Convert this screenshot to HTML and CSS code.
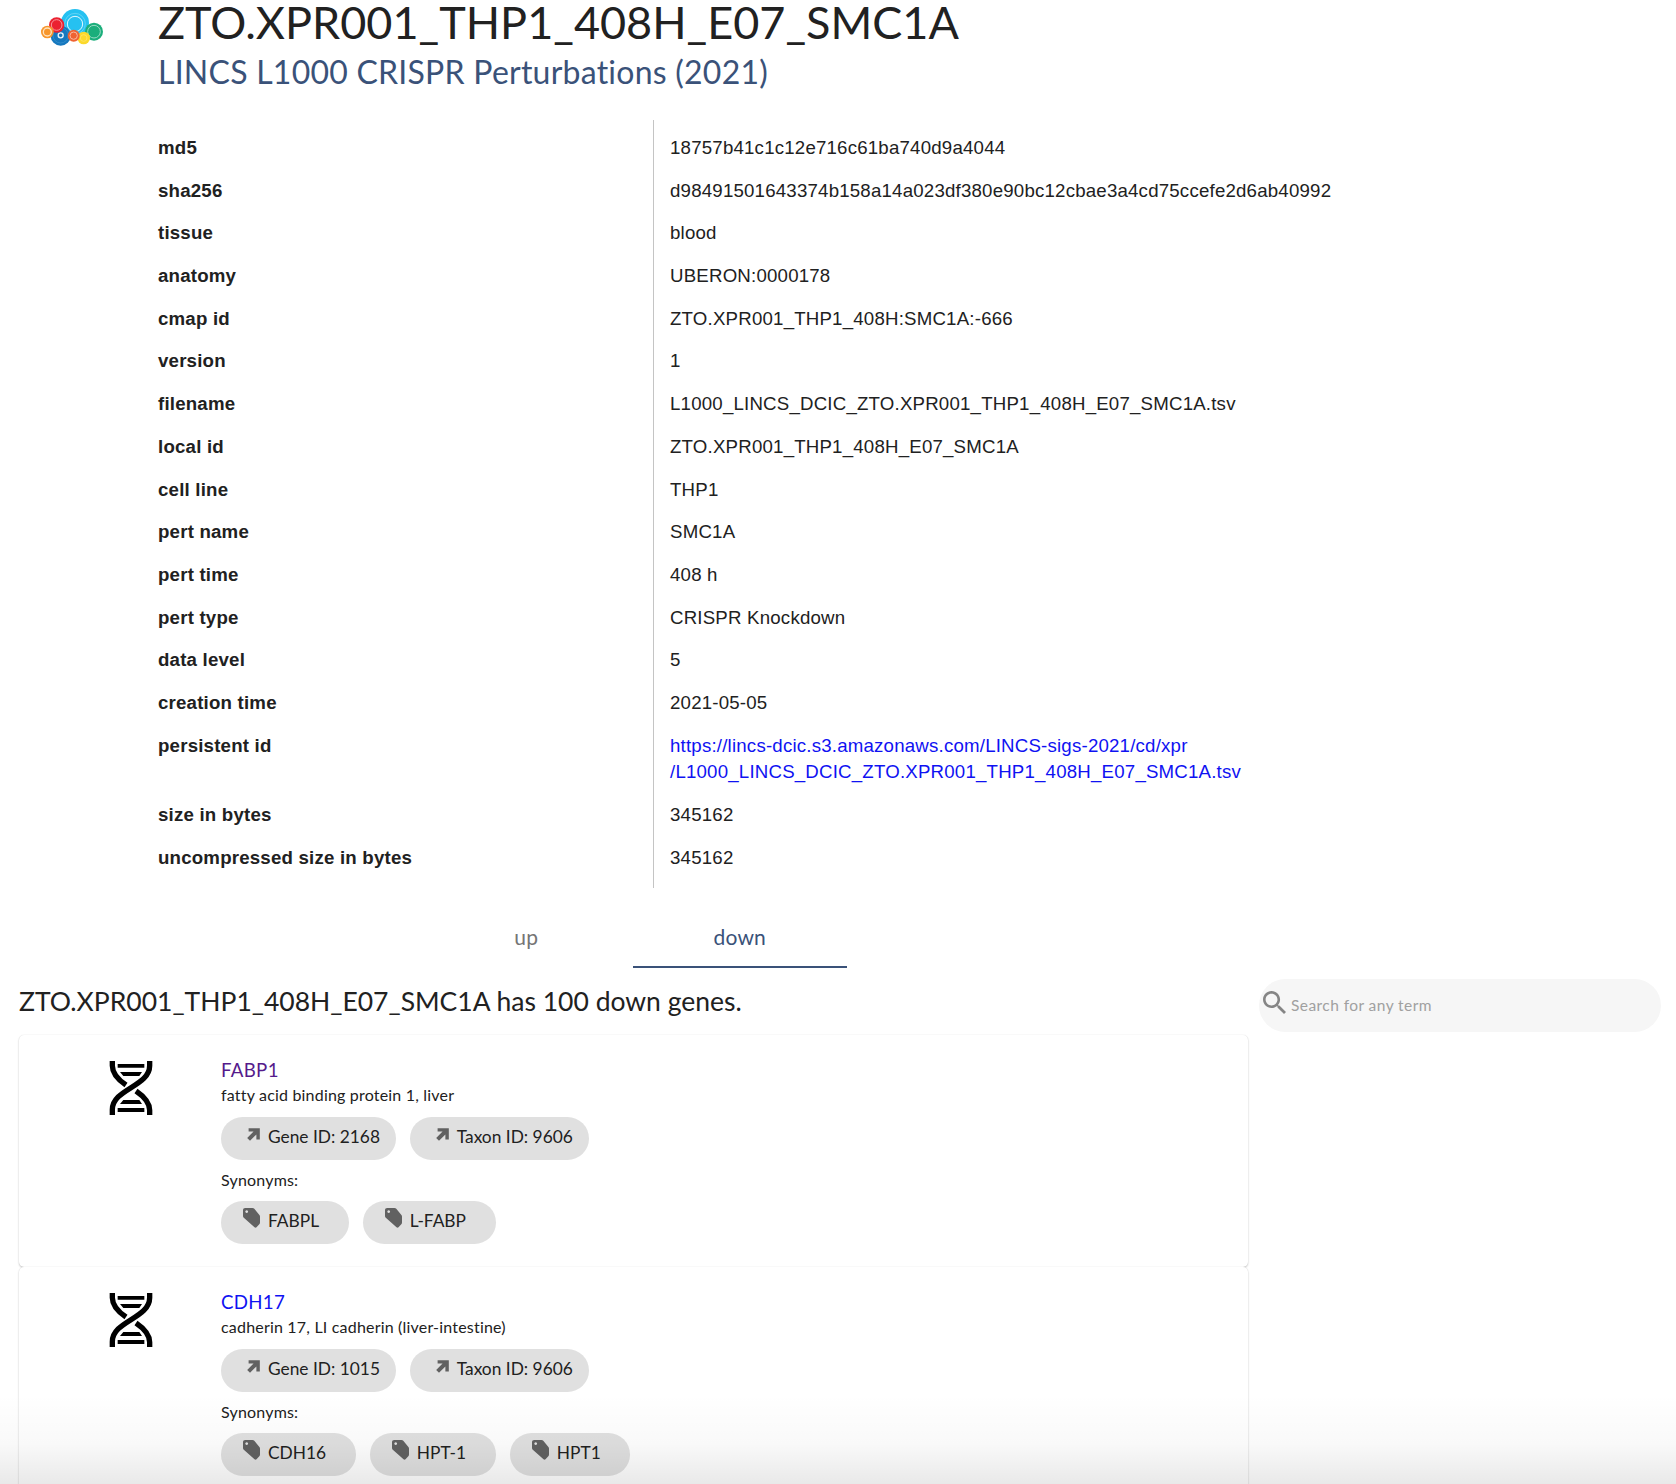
FILE: index.html
```html
<!DOCTYPE html>
<html lang="en">
<head>
<meta charset="utf-8">
<title>ZTO.XPR001_THP1_408H_E07_SMC1A</title>
<link rel="stylesheet" href="styles.css">
</head>
<body>
<svg class="defs" width="0" height="0">
  <symbol id="dna" viewBox="0 0 130 162">
    <g fill="none" stroke="#000" stroke-width="16">
      <path d="M121 0V14C121 76 9 84 9 146V162"/>
      <path d="M9 0V14C9 40 28 57 50 72M80 90C102 105 121 122 121 148V162"/>
    </g>
    <path d="M25 9H105V20H25ZM32 33H98L90 45H42ZM42 117H90L98 129H32ZM25 141H105V153H25Z"/>
  </symbol>
  <symbol id="arrow" viewBox="5.500 5.500 13 13"><path d="M8.500 18.310L5.690 15.500L12.060 9.120H7.110V5.690H18.310V16.890H14.880V11.940Z"/></symbol>
  <symbol id="tag" viewBox="0 0 17 20"><path fill-rule="evenodd" d="M2.200 0H9.500C10.300 0 10.800.2 11.300.8L16.400 7C16.900 7.600 17 8 17 8.700V14.500C17 15.200 16.800 15.700 16.300 16.200L13.500 19.300C12.900 19.900 12.100 19.900 11.500 19.300L.8 9.800C.2 9.200 0 8.700 0 8V2.200C0 .9.9 0 2.200 0ZM3.700 2.200A1.400 1.400 0 1 0 3.710 2.200Z"/></symbol>
</svg>
<header class="head">
  <svg class="logo" viewBox="0 0 270 180">
    <circle cx="135" cy="69" r="42" fill="#25c1f1"/><circle cx="135" cy="71" r="31" fill="none" stroke="#7bdcf7" stroke-width="2"/><circle cx="135" cy="72" r="23" fill="none" stroke="#e4f8fe" stroke-width="3"/>
    <circle cx="92" cy="107" r="30" fill="#1678be"/><circle cx="92" cy="106" r="23" fill="none" stroke="#3c94d0" stroke-width="2"/><circle cx="92" cy="106" r="7.500" fill="none" stroke="#e8f4fb" stroke-width="4"/>
    <circle cx="80" cy="75" r="23" fill="#eb2130"/><circle cx="80" cy="75" r="16" fill="none" stroke="#f7949b" stroke-width="3"/>
    <circle cx="52" cy="96" r="19" fill="#f7962c"/><circle cx="52" cy="96" r="12" fill="none" stroke="#ffe2bd" stroke-width="4"/>
    <circle cx="192" cy="95" r="27" fill="#1bae7b"/><circle cx="192" cy="95" r="19" fill="none" stroke="#98dcc4" stroke-width="3"/>
    <circle cx="161" cy="114" r="19" fill="#fbd92b"/><circle cx="161" cy="114" r="10" fill="none" stroke="#fde777" stroke-width="2"/>
    <circle cx="131" cy="107" r="18" fill="#ef6232"/><circle cx="131" cy="107" r="11" fill="none" stroke="#f9b7a0" stroke-width="3"/>
  </svg>
  <div>
    <h1 class="title">ZTO.XPR001_THP1_408H_E07_SMC1A</h1>
    <p class="subtitle">LINCS L1000 CRISPR Perturbations (2021)</p>
  </div>
</header>
<dl class="meta">
  <div class="row"><dt>md5</dt><dd>18757b41c1c12e716c61ba740d9a4044</dd></div>
  <div class="row"><dt>sha256</dt><dd>d98491501643374b158a14a023df380e90bc12cbae3a4cd75ccefe2d6ab40992</dd></div>
  <div class="row"><dt>tissue</dt><dd>blood</dd></div>
  <div class="row"><dt>anatomy</dt><dd>UBERON:0000178</dd></div>
  <div class="row"><dt>cmap id</dt><dd>ZTO.XPR001_THP1_408H:SMC1A:-666</dd></div>
  <div class="row"><dt>version</dt><dd>1</dd></div>
  <div class="row"><dt>filename</dt><dd>L1000_LINCS_DCIC_ZTO.XPR001_THP1_408H_E07_SMC1A.tsv</dd></div>
  <div class="row"><dt>local id</dt><dd>ZTO.XPR001_THP1_408H_E07_SMC1A</dd></div>
  <div class="row"><dt>cell line</dt><dd>THP1</dd></div>
  <div class="row"><dt>pert name</dt><dd>SMC1A</dd></div>
  <div class="row"><dt>pert time</dt><dd>408 h</dd></div>
  <div class="row"><dt>pert type</dt><dd>CRISPR Knockdown</dd></div>
  <div class="row"><dt>data level</dt><dd>5</dd></div>
  <div class="row"><dt>creation time</dt><dd>2021-05-05</dd></div>
  <div class="row"><dt>persistent id</dt><dd><a class="link">https://lincs-dcic.s3.amazonaws.com/LINCS-sigs-2021/cd/xpr<br>/L1000_LINCS_DCIC_ZTO.XPR001_THP1_408H_E07_SMC1A.tsv</a></dd></div>
  <div class="row"><dt>size in bytes</dt><dd>345162</dd></div>
  <div class="row"><dt>uncompressed size in bytes</dt><dd>345162</dd></div>
</dl>
<nav class="tabs"><span class="tab">up</span><span class="tab active">down</span></nav>
<main class="main">
  <section class="results">
    <h2 class="count">ZTO.XPR001_THP1_408H_E07_SMC1A has 100 down genes.</h2>
    <article class="card">
      <svg class="dna"><use href="#dna"/></svg>
      <div class="info">
        <a class="gene visited">FABP1</a>
        <p class="small">fatty acid binding protein 1, liver</p>
        <div class="chips">
          <span class="chip"><svg class="arrow"><use href="#arrow"/></svg>Gene ID: 2168</span>
          <span class="chip"><svg class="arrow"><use href="#arrow"/></svg>Taxon ID: 9606</span>
        </div>
        <p class="small syn">Synonyms:</p>
        <div class="chips tags">
          <span class="chip"><svg class="tag"><use href="#tag"/></svg>FABPL</span>
          <span class="chip"><svg class="tag"><use href="#tag"/></svg>L-FABP</span>
        </div>
      </div>
    </article>
    <article class="card">
      <svg class="dna"><use href="#dna"/></svg>
      <div class="info">
        <a class="gene">CDH17</a>
        <p class="small">cadherin 17, LI cadherin (liver-intestine)</p>
        <div class="chips">
          <span class="chip"><svg class="arrow"><use href="#arrow"/></svg>Gene ID: 1015</span>
          <span class="chip"><svg class="arrow"><use href="#arrow"/></svg>Taxon ID: 9606</span>
        </div>
        <p class="small syn">Synonyms:</p>
        <div class="chips tags">
          <span class="chip"><svg class="tag"><use href="#tag"/></svg>CDH16</span>
          <span class="chip"><svg class="tag"><use href="#tag"/></svg>HPT-1</span>
          <span class="chip"><svg class="tag"><use href="#tag"/></svg>HPT1</span>
        </div>
      </div>
    </article>
  </section>
  <div class="search">
    <svg class="glass" viewBox="3 3 17.500 17.500"><path d="M15.500 14h-.79l-.28-.27C15.410 12.590 16 11.110 16 9.500 16 5.910 13.090 3 9.500 3S3 5.910 3 9.500 5.910 16 9.500 16c1.610 0 3.090-.59 4.230-1.570l.27.28v.79l5 4.990L20.490 19l-4.990-5zm-6 0C7.010 14 5 11.990 5 9.500S7.010 5 9.500 5 14 7.010 14 9.500 11.990 14 9.500 14z"/></svg>
    <span>Search for any term</span>
  </div>
</main>
<div class="fade"></div>
</body>
</html>
```
FILE: styles.css
```css
* { box-sizing: border-box; margin: 0; padding: 0; }
body { width: 1676px; height: 1484px; overflow: hidden; background: #fff; color: #212121; font-family: Lato, sans-serif; position: relative; }
.defs { position: absolute; }
.head { display: flex; height: 120px; }
.logo { width: 90px; height: 60px; margin: 0 38px 0 30px; flex: none; }
.title { font-size: 45px; font-weight: 400; line-height: 45px; white-space: nowrap; }
.subtitle { font-size: 32px; line-height: 43px; margin-top: 5px; letter-spacing: .00735em; color: #3a5279; }
.meta { margin-left: 158px; padding: 7px 0; height: 768px; font: 18.670px/26.690px "Liberation Sans", Arial, sans-serif; letter-spacing: .01071em; background: linear-gradient(#c4c4c4, #c4c4c4) 495px 0 / 1px 100% no-repeat; }
.row { display: grid; grid-template-columns: 512px 1fr; padding: 8px 0; }
dt { font-weight: 700; }
.link { color: #0f12f2; }
.tabs { display: flex; margin-left: 419.500px; height: 80px; padding-top: 16px; }
.tab { width: 213.500px; height: 64px; text-align: center; font-size: 21px; line-height: 65px; letter-spacing: .01em; color: #757575; }
.active { color: #3a5279; border-bottom: 2px solid #3a5279; }
.main { display: flex; padding: 0 15px 0 19px; }
.results { width: 1229px; }
.count { font-size: 26.500px; line-height: 32px; height: 66.500px; padding-top: 17px; font-weight: 400; white-space: nowrap; }
.card { height: 232.500px; padding: 26px 0 0 90px; display: flex; border-radius: 5px; background: #fff; box-shadow: 0 1px 2px rgba(0,0,0,.22), 0 0 1px rgba(0,0,0,.12); }
.dna { width: 44px; height: 54px; margin-right: 68px; flex: none; }
.gene { display: block; font-size: 18.670px; line-height: 24px; height: 25px; margin-top: -3px; letter-spacing: .017em; color: #0f12f2; }
.visited { color: #551a8b; }
.small { font-size: 16px; line-height: 20px; letter-spacing: .012em; margin-top: 2px; }
.chips { display: flex; gap: 13.300px; margin-top: 12px; }
.chip { display: flex; height: 43px; border-radius: 21.500px; background: #e0e0e0; font-size: 17.330px; line-height: 40px; padding: 0 16.500px 0 24px; white-space: nowrap; }
.syn { margin-top: 10px; }
.tags { margin-top: 11px; gap: 14px; }
.tags .chip { padding: 0 29.700px 0 22px; }
.arrow, .tag { fill: #616161; flex: none; }
.arrow { width: 13px; height: 13px; margin: 11px 8px 0 2px; }
.tag { width: 17px; height: 20px; margin: 7px 8px 0 0; }
.search { display: flex; width: 402px; height: 53px; margin: 11px 0 0 11px; border-radius: 26.500px; background: #f6f6f6; color: #a0a0a0; font-size: 15.500px; line-height: 53px; letter-spacing: .028em; }
.glass { width: 23px; height: 23px; fill: #858585; margin: 12px 5px 0 4px; }
.fade { position: absolute; left: 0; right: 0; bottom: 0; height: 90px; background: linear-gradient(rgba(0,0,0,0), rgba(0,0,0,.025) 55%, rgba(0,0,0,.085)); }
```
